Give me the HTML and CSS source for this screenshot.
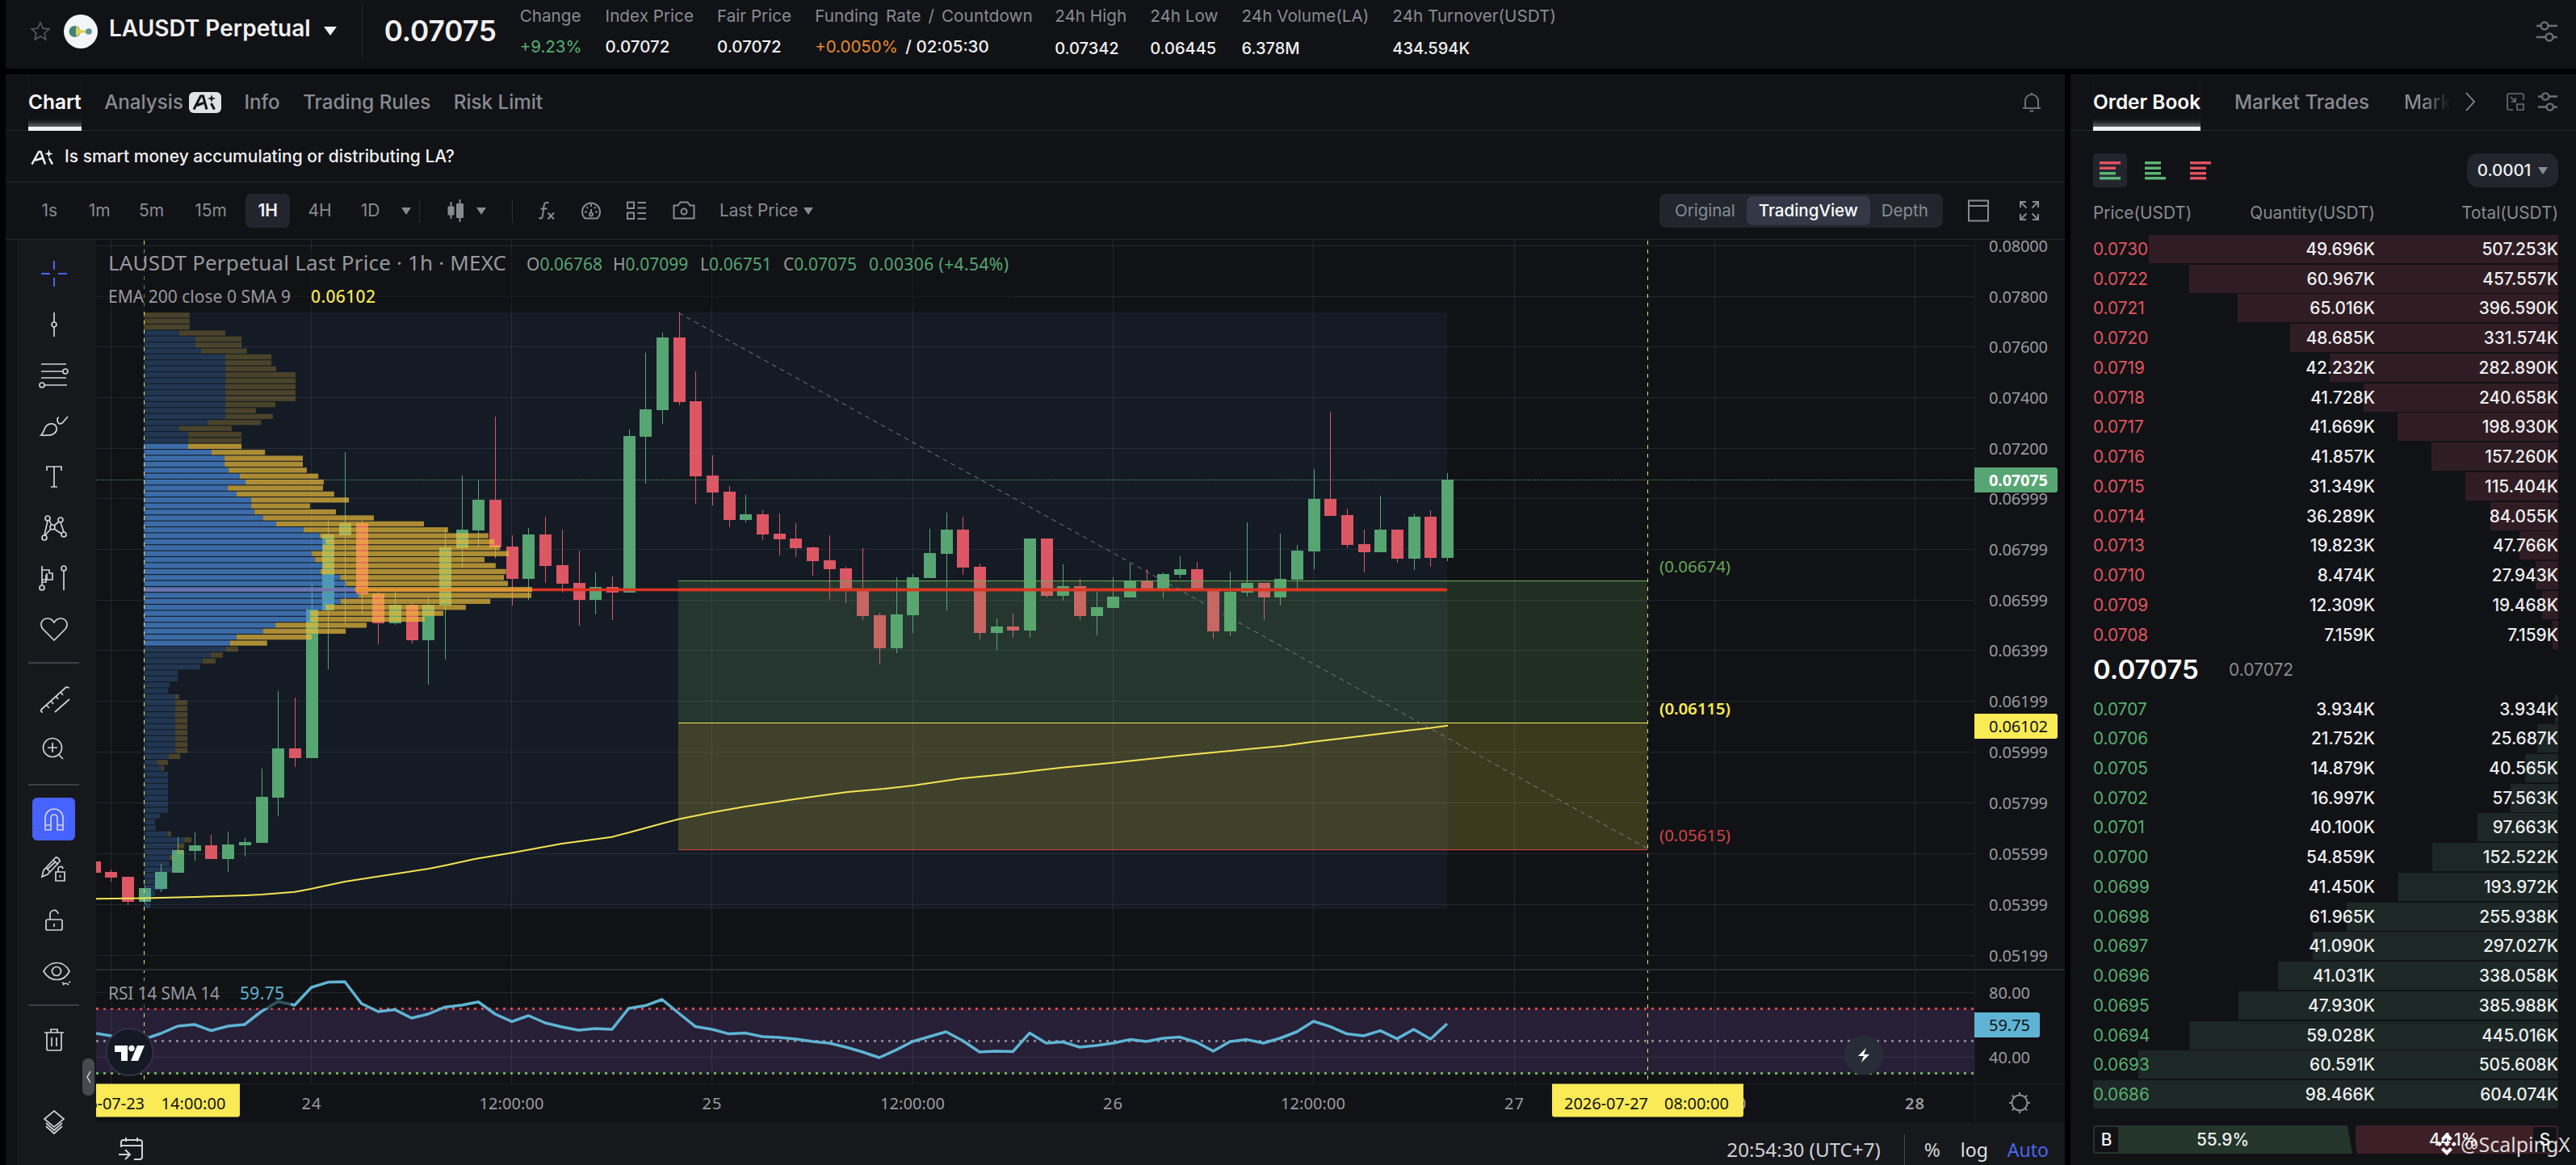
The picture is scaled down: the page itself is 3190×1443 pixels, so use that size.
FILE: index.html
```html
<!DOCTYPE html>
<html lang="en">
<head>
<meta charset="utf-8">
<title>LAUSDT Perpetual</title>
<link rel="stylesheet" href="styles.css">
</head>
<body>
<div class="app">
  <header class="ticker">
    <svg class="star" width="28" height="28" viewBox="0 0 28 28"><path d="M14 3l3.2 7.2 7.6.8-5.700 5.200 1.700 7.800L14 20l-6.800 4 1.700-7.800L3.200 11l7.600-.8z"/></svg>
    <svg class="coin" width="42" height="42" viewBox="0 0 42 42"><circle cx="21" cy="21" r="21" fill="#f4f5f7"/><circle cx="13.500" cy="21" r="7" fill="#3f8378"/><path d="M15 14.500c4 3 5 4.500 9 5 3 .5 4-1 6-3v9c-2-2-3-3.500-6-3-4 .5-5 2-9 5z" fill="#e0cf58"/><circle cx="31" cy="21" r="3.800" fill="#57969a"/></svg>
    <h1 class="pair">LAUSDT Perpetual</h1>
    <i class="caret caret-lg"></i>
    <div class="rule"></div>
    <div class="last">0.07075</div>
    <dl class="stats">
      <div><dt>Change</dt><dd class="up regular">+9.23%</dd></div>
      <div><dt>Index Price</dt><dd>0.07072</dd></div>
      <div><dt>Fair Price</dt><dd>0.07072</dd></div>
      <div><dt class="wide">Funding Rate / Countdown</dt><dd><span class="fund">+0.0050%</span> / 02:05:30</dd></div>
      <div class="low"><dt>24h High</dt><dd>0.07342</dd></div>
      <div class="low"><dt>24h Low</dt><dd>0.06445</dd></div>
      <div class="low"><dt>24h Volume(LA)</dt><dd>6.378M</dd></div>
      <div class="low"><dt>24h Turnover(USDT)</dt><dd>434.594K</dd></div>
    </dl>
    <svg class="sliders push" width="28" height="28" viewBox="0 0 28 28"><path d="M1 7h6M15 7h12M1 21h12M21 21h6"/><circle cx="11" cy="7" r="4.500"/><circle cx="17" cy="21" r="4.500"/></svg>
  </header>

  <main class="workspace">
    <section class="panel market">
      <nav class="tabs">
        <a class="tab active">Chart</a>
        <a class="tab">Analysis<span class="badge"><svg width="34" height="20" viewBox="0 0 34 20"><path d="M3 18.500L11.500 2h3l4.500 16.500M7 13.500l8-3M24.500 11l4 7.500"/><path class="fill" d="M25 0l1.200 3.800L30 5l-3.800 1.200L25 10l-1.200-3.800L20 5l3.800-1.200z"/></svg></span></a>
        <a class="tab">Info</a>
        <a class="tab">Trading Rules</a>
        <a class="tab">Risk Limit</a>
        <svg class="ico bell push" width="26" height="28" viewBox="0 0 26 28"><path d="M13 3v2M5 22V13a8 8 0 0 1 16 0v9M2 22h22M10.500 25.500h5"/></svg>
      </nav>

      <div class="insight">
        <svg width="30" height="20" viewBox="0 0 30 20"><path d="M1.500 18.500L10 3h2.500L18 18.500M5.500 13.500L14.500 11M23 11l4 7.500"/><path class="fill" d="M22.500 0l1.200 4.300L28 5.500l-4.300 1.200L22.500 11l-1.200-4.300L17 5.500l4.300-1.200z"/></svg>
        <span>Is smart money accumulating or distributing LA?</span>
      </div>

      <div class="toolbar">
        <div class="intervals">
          <span>1s</span><span>1m</span><span>5m</span><span class="m15">15m</span><span class="on">1H</span><span>4H</span><span>1D</span>
        </div>
        <i class="caret c1"></i>
        <i class="vr"></i>
        <svg class="kicon" width="22" height="28" viewBox="0 0 22 28"><path d="M4.500 3v21M15.500 0v28" stroke="#878b93" stroke-width="2"/><path d="M1.500 8.500h6q1 0 1 1v9q0 1-1 1h-6q-1 0-1-1v-9q0-1 1-1zM12 5h7q1 0 1 1v16q0 1-1 1h-7q-1 0-1-1V6q0-1 1-1z" fill="#878b93"/></svg>
        <i class="caret c2"></i>
        <i class="vr v2"></i>
        <svg class="ico" width="24" height="26" viewBox="0 0 24 26"><path d="M14.500 3.500c-4-2-5.500 0-6 4L7 19c-.5 3.500-2 4-4.500 3M4.500 10.500h8M13.500 15.500l7.500 8M21 15.500l-7.500 8"/></svg>
        <svg class="ico" width="26" height="26" viewBox="0 0 26 26"><path d="M5.500 22.500A11 11 0 1 1 20.500 22.500zM13 5v3M7.500 8.500l1.500 1.500M18.500 8.500L17 10M5 14.500h3M18 14.500h3M13 11v4"/><circle cx="13" cy="17.500" r="2"/></svg>
        <svg class="ico" width="26" height="26" viewBox="0 0 26 26"><path d="M2 2.500h8v7.500H2zM2 15.500h8V23H2zM14.500 3H25M14.500 9.500H25M14.500 16H25M14.500 23H25"/></svg>
        <svg class="ico cam" width="28" height="26" viewBox="0 0 28 26"><path d="M1.500 6.500h5l3-4h9l3 4h5v16h-25z"/><circle cx="14" cy="14" r="3.500"/></svg>
        <span class="lp">Last Price</span><i class="caret c3"></i>
        <div class="modes push"><span>Original</span><span class="on">TradingView</span><span>Depth</span></div>
        <svg class="ico" width="28" height="28" viewBox="0 0 28 28"><path d="M2 1.500h24v25H2zM2 8h24"/></svg>
        <svg class="ico expand" width="26" height="26" viewBox="0 0 26 26"><path d="M2 9V2h7M2 2l7.500 7.500M17 2h7v7M24 2l-7.500 7.500M2 17v7h7M2 24l7.500-7.500M24 17v7h-7M24 24l-7.500-7.500"/></svg>
      </div>

      <div class="charting">
        <aside class="tools">
          <svg class="t" viewBox="-20 -20 40 40"><path stroke="#4466f5" stroke-width="2" d="M-16 0h11M5 0h11M0-16v11M0 5v11"/></svg>
          <svg class="t" viewBox="-20 -20 40 40"><path d="M0-15v12M0 3v12"/><circle r="3"/></svg>
          <svg class="t" viewBox="-20 -20 40 40"><path d="M-16-14h31M-16-5h27M-16 3h31M-12 12h28"/><circle cx="14" cy="-5" r="3"/><circle cx="-15" cy="12" r="3"/></svg>
          <svg class="t" viewBox="-20 -20 40 40"><path d="M-16 11c3-2 3-7 6-11 4-5 12-4 13 2 1 7-7 10-13 9-3 1-4 0-6 0zM4-9c0 6 3 7 6 5l7-8M6-11c-2 0-2 2-2 3"/></svg>
          <svg class="t" viewBox="-20 -20 40 40"><path d="M-9-8v-5H9v5M0-13v25M-4 12h8"/></svg>
          <svg class="t" viewBox="-20 -20 40 40"><circle cx="-8" cy="-11" r="3"/><circle cx="8" cy="-9" r="3"/><circle cx="-2" cy="0" r="3"/><circle cx="-12" cy="13" r="3"/><circle cx="12" cy="9" r="3"/><path d="M-8-8l-4 18M-6-9l3 7M6-7L0-2M8-6l4 12M0 2l9 6M-4 2l-7 8"/></svg>
          <svg class="t" viewBox="-20 -20 40 40"><path d="M-15-15V9M-15-10h9v4h4v8h-13M-15 5h5v-9M-9 2v-8M12-9v24"/><circle cx="-15" cy="12" r="3"/><circle cx="12" cy="-12" r="3"/></svg>
          <svg class="t" viewBox="-20 -20 40 40"><path d="M0 14L-14 0c-5-7 0-13 6-13 4 0 6 2 8 5 2-3 4-5 8-5 6 0 11 6 6 13z"/></svg>
          <i class="hr"></i>
          <svg class="t" viewBox="-20 -20 40 40"><path d="M-16 15v-3L15-16l4 1M-16 15h2M1 15L19-1M-10 6l4 4M-4 1l3 4M2-5l3 4M8-10l3 4"/></svg>
          <svg class="t t-zoom" viewBox="-20 -20 40 40"><circle cx="-2" cy="-1" r="11.500"/><path d="M-8-1h12M-2-7v12M6 8l5 5"/></svg>
          <i class="hr hr-2"></i>
          <div class="magnet"><svg class="t" viewBox="-20 -20 40 40"><path d="M-11 13V-2a11 11 0 0 1 22 0v15H4V-2a4 4 0 0 0-8 0v15zM-11 7h7M4 7h7"/></svg></div>
          <svg class="t" viewBox="-20 -20 40 40"><path d="M-15 9l2-8L1-14q2-2 4 0l1 1q2 2 0 4L-8 6zM-10-2l5 5M-1-12l6 6M-9 0L2-10M2 3h11v11H2zM5 3v-3a3 3 0 0 1 6-1M7.500 7v3"/></svg>
          <svg class="t" viewBox="-20 -20 40 40"><path d="M-8-1H8q2 0 2 2v9q0 2-2 2H-8q-2 0-2-2V1q0-2 2-2zM-5-1v-6a5 5 0 0 1 10-1M0 4v4"/></svg>
          <svg class="t" viewBox="-20 -20 40 40"><path d="M-13 0C-5-14 12-14 19 0 12 14-5 14-13 0z"/><circle cx="3" r="5.500"/><path d="M11 17q3-4 7 0M12 15l-2-1M18 14l2-1"/></svg>
          <i class="hr hr-3"></i>
          <svg class="t" viewBox="-20 -20 40 40"><path d="M-12-9h24M-9-9v20q0 2 2 2H7q2 0 2-2V-9M-4-9v-4h8v4M-3-3v11M3-3v11"/></svg>
          <svg class="t layers" viewBox="-20 -20 40 40"><path d="M0-14L12-4 0 6-12-4zM-10 1L0 10 10 1M-10 5L0 14 10 5"/></svg>
        </aside>

        <div class="plotcol">
          <svg class="plot" id="plot" width="2438" height="1093" viewBox="119 297 2438 1093">
            <g id="grid" class="grid"></g>
            <rect x="178.500" y="387" width="1614" height="739" fill="rgba(60,130,200,.085)"/>
            <rect x="119" y="1249.500" width="2326" height="80" fill="#261f36"/>
            <path class="grid" d="M119 1309.500H2445M137.500 1250v79M385.500 1250v79M633.500 1250v79M881.500 1250v79M1130.500 1250v79M1378.500 1250v79M1626.500 1250v79M1875.500 1250v79M2123.500 1250v79M2371.500 1250v79"/>
            <g id="candles"></g>
            <path d="M119 594.500H2445" stroke="#56a573" stroke-dasharray="1 1.250"/>
            <path d="M178.500 730.500H1792" stroke="#db3522" stroke-width="3.500"/>
            <g id="profile"></g>
            <rect x="840" y="720" width="1200" height="175" fill="rgba(104,176,96,.19)"/>
            <rect x="840" y="895" width="1200" height="157" fill="rgba(248,232,70,.19)"/>
            <path d="M840 719.500H2040" stroke="#6aac58"/>
            <path d="M840 895.500H2040" stroke="#f7e94f"/>
            <path d="M840 1052.500H2040" stroke="#d8433f"/>
            <path d="M840 730.500H1792" stroke="#db3522" stroke-width="3.500"/>
            <path d="M840.500 387.500L2040 1051" stroke="#85868c" stroke-dasharray="6 5" opacity=".9"/>
            <path d="M178.500 298V1342M2040.500 298V1342" stroke="#f3e45c" stroke-dasharray="5 6"/>
            <path class="ema" d="M119 1113.300L179 1112.500 241 1111 304 1109 324 1108 365 1104.700 385 1101 427 1092 469 1085.400 531 1076 551 1072 589 1063.700 633 1056.500 695.600 1045 757.700 1036.700 778.600 1031.300 819 1020.300 840 1014.700 882 1006.300 923 999 985 989.700 1049.500 981 1095 977 1130.500 973 1190 964.300 1254 958 1280 954.700 1315 950.700 1378.600 944.700 1463 935.700 1544 928 1590 923.700 1626 918.700 1667 914 1750 904 1771 901.700 1793 898.700"/>
            <path d="M119 1249.500H2445" stroke="#dc4a4a" stroke-width="3" stroke-dasharray="3 6"/>
            <path d="M119 1289.500H2445" stroke="#85828f" stroke-width="3" stroke-dasharray="3 6"/>
            <path d="M119 1329.500H2445" stroke="#6fb05a" stroke-width="3" stroke-dasharray="3 6"/>
            <polyline id="rsi" class="rsi"/>
            <rect x="128" y="1213" width="232" height="36" fill="rgba(17,18,21,.6)"/>
            <path d="M119 1201H2557" stroke="#2a2b2f" stroke-width="2"/>
            <path d="M119 1342.500H2557M2445.500 297V1390" stroke="#1e1f23"/>

            <rect x="128" y="310" width="1128" height="70" fill="rgba(17,18,21,.5)"/>
            <g class="txt legend">
              <text x="134" y="335" font-size="26" textLength="493">LAUSDT Perpetual Last Price · 1h · MEXC</text>
              <text x="652" y="335">O<tspan class="g">0.06768</tspan></text>
              <text x="759" y="335">H<tspan class="g">0.07099</tspan></text>
              <text x="867" y="335">L<tspan class="g">0.06751</tspan></text>
              <text x="970" y="335">C<tspan class="g">0.07075</tspan></text>
              <text x="1076" y="335" class="g" textLength="173">0.00306 (+4.54%)</text>
              <text x="134" y="375" textLength="226">EMA 200 close 0 SMA 9</text>
              <text x="385" y="375" class="y" textLength="80">0.06102</text>
              <text x="134" y="1238" textLength="138">RSI 14 SMA 14</text>
              <text x="297" y="1238" fill="#5fb4d3" textLength="55">59.75</text>
            </g>
            <g class="txt lvl">
              <text x="2055" y="709" fill="#64a657" textLength="88">(0.06674)</text>
              <text x="2055" y="885" fill="#f8ea56" font-weight="600" textLength="88">(0.06115)</text>
              <text x="2055" y="1042" fill="#d04545" textLength="88">(0.05615)</text>
            </g>
            <g class="txt axis" id="priceAxis"></g>
            <g class="txt axis time">
              <text x="385.500" y="1374" textLength="24">24</text>
              <text x="633.500" y="1374" textLength="80">12:00:00</text>
              <text x="881.500" y="1374" textLength="24">25</text>
              <text x="1130" y="1374" textLength="80">12:00:00</text>
              <text x="1378" y="1374" textLength="24">26</text>
              <text x="1626" y="1374" textLength="80">12:00:00</text>
              <text x="1875" y="1374" textLength="24">27</text>
              <text x="2122.500" y="1374" textLength="80">12:00:00</text>
              <text x="2371" y="1374" font-weight="600" textLength="24">28</text>
            </g>
            <path d="M119 1342.500h178v38q0 3-3 3H119zM1922 1342.500h237v38q0 3-3 3h-231q-3 0-3-3z" fill="#f9ea56"/>
            <g class="txt tags">
              <text x="75" y="1374" textLength="104">2026-07-23</text><text x="199.500" y="1374" textLength="80">14:00:00</text>
              <text x="1937" y="1374" textLength="104">2026-07-27</text><text x="2061" y="1374" textLength="80">08:00:00</text>
            </g>
            <path d="M2445 579h100q3 0 3 3v25q0 3-3 3h-100z" fill="#56a573"/>
            <path d="M2445 884h100q3 0 3 3v25q0 3-3 3h-100z" fill="#f9ea56"/>
            <path d="M2445 1254h78q3 0 3 3v25q0 3-3 3h-78z" fill="#5fb4d3"/>
            <g class="txt tags">
              <text x="2463" y="602" fill="#fff" font-weight="700" textLength="73">0.07075</text>
              <text x="2463" y="907" textLength="73">0.06102</text>
              <text x="2463" y="1277" textLength="51">59.75</text>
            </g>
            <g class="gear" transform="translate(2501 1366)"><circle r="9.500"/><path d="M0-9.500V-13M0 9.500V13M-9.500 0H-13M9.500 0H13M-6.700-6.700l-2.500-2.500M6.700 6.700l2.500 2.500M-6.700 6.700l-2.500 2.500M6.700-6.700l2.500-2.500"/></g>
            <circle cx="2308" cy="1307" r="24.500" fill="#272d36"/>
            <path d="M2311 1298l-10 10h7l-3 8 10-10h-7z" fill="#fff"/>
            <circle cx="160.500" cy="1303" r="29" fill="#141a23" stroke="#332f47" stroke-width="2"/>
            <path d="M142 1295h16v19h-8v-11h-8zM170 1295h9l-8 19h-9z" fill="#fff"/><circle cx="163" cy="1298.500" r="3.700" fill="#fff"/>
          </svg>
          <footer class="chartfoot">
            <svg class="cal" width="32" height="30" viewBox="0 0 32 30"><path d="M3 12V6q0-3 3-3h20q3 0 3 3v18q0 3-3 3h-7M3 10h26M9 0v5M23 0v5M0 21h13M8 15l6 6-6 6"/></svg>
            <span class="clock push">20:54:30 (UTC+7)</span>
            <i class="vr"></i>
            <span class="pc">%</span><span class="log">log</span><span class="auto">Auto</span>
          </footer>
          <div class="fold"><svg width="8" height="16" viewBox="0 0 8 16"><path d="M6 1L2 8l4 7"/></svg></div>
        </div>
      </div>
    </section>

    <section class="panel book">
      <nav class="tabs">
        <a class="tab active">Order Book</a>
        <a class="tab">Market Trades</a>
        <a class="tab fade">Mark</a>
        <svg class="chev" width="16" height="24" viewBox="0 0 16 24"><path d="M2 1l10 11L2 23"/></svg>
        <svg class="ico pop" width="24" height="24" viewBox="0 0 24 24"><path d="M9 22H4q-2 0-2-2V4q0-2 2-2h16q2 0 2 2v6M14 15h8v7h-8zM6 6l6 6M12 7v5H7"/></svg>
        <svg class="sliders" width="26" height="26" viewBox="0 0 28 28"><path d="M1 7h6M15 7h12M1 21h12M21 21h6"/><circle cx="11" cy="7" r="4.500"/><circle cx="17" cy="21" r="4.500"/></svg>
      </nav>
      <div class="views">
        <span class="view on"><svg width="26" height="24" viewBox="0 0 26 24"><path class="r" d="M0 1h26v3.500H0zM0 7.500h20V11H0z"/><path class="g" d="M0 14h20v3.500H0zM0 20h26v3.500H0z"/></svg></span>
        <span class="view"><svg width="26" height="24" viewBox="0 0 26 24"><path class="g" d="M0 1h20v3.500H0zM0 7.500h20V11H0zM0 14h20v3.500H0zM0 20h26v3.500H0z"/></svg></span>
        <span class="view"><svg width="26" height="24" viewBox="0 0 26 24"><path class="r" d="M0 1h26v3.500H0zM0 7.500h20V11H0zM0 14h20v3.500H0zM0 20h20v3.500H0z"/></svg></span>
        <span class="step push">0.0001<i class="caret"></i></span>
      </div>
      <div class="row head"><span>Price(USDT)</span><span>Quantity(USDT)</span><span>Total(USDT)</span></div>
      <div class="side asks">
        <div class="row"><i style="width:88.1%"></i><span>0.0730</span><span>49.696K</span><span>507.253K</span></div>
        <div class="row"><i style="width:79.4%"></i><span>0.0722</span><span>60.967K</span><span>457.557K</span></div>
        <div class="row"><i style="width:68.9%"></i><span>0.0721</span><span>65.016K</span><span>396.590K</span></div>
        <div class="row"><i style="width:57.6%"></i><span>0.0720</span><span>48.685K</span><span>331.574K</span></div>
        <div class="row"><i style="width:49.1%"></i><span>0.0719</span><span>42.232K</span><span>282.890K</span></div>
        <div class="row"><i style="width:41.8%"></i><span>0.0718</span><span>41.728K</span><span>240.658K</span></div>
        <div class="row"><i style="width:34.6%"></i><span>0.0717</span><span>41.669K</span><span>198.930K</span></div>
        <div class="row"><i style="width:27.3%"></i><span>0.0716</span><span>41.857K</span><span>157.260K</span></div>
        <div class="row"><i style="width:20.0%"></i><span>0.0715</span><span>31.349K</span><span>115.404K</span></div>
        <div class="row"><i style="width:14.6%"></i><span>0.0714</span><span>36.289K</span><span>84.055K</span></div>
        <div class="row"><i style="width:8.3%"></i><span>0.0713</span><span>19.823K</span><span>47.766K</span></div>
        <div class="row"><i style="width:4.9%"></i><span>0.0710</span><span>8.474K</span><span>27.943K</span></div>
        <div class="row"><i style="width:3.4%"></i><span>0.0709</span><span>12.309K</span><span>19.468K</span></div>
        <div class="row"><i style="width:1.2%"></i><span>0.0708</span><span>7.159K</span><span>7.159K</span></div>
      </div>
      <div class="mid"><b>0.07075</b><span>0.07072</span></div>
      <div class="side bids">
        <div class="row"><i style="width:0.7%"></i><span>0.0707</span><span>3.934K</span><span>3.934K</span></div>
        <div class="row"><i style="width:4.6%"></i><span>0.0706</span><span>21.752K</span><span>25.687K</span></div>
        <div class="row"><i style="width:7.2%"></i><span>0.0705</span><span>14.879K</span><span>40.565K</span></div>
        <div class="row"><i style="width:10.2%"></i><span>0.0702</span><span>16.997K</span><span>57.563K</span></div>
        <div class="row"><i style="width:17.3%"></i><span>0.0701</span><span>40.100K</span><span>97.663K</span></div>
        <div class="row"><i style="width:27.1%"></i><span>0.0700</span><span>54.859K</span><span>152.522K</span></div>
        <div class="row"><i style="width:34.4%"></i><span>0.0699</span><span>41.450K</span><span>193.972K</span></div>
        <div class="row"><i style="width:45.5%"></i><span>0.0698</span><span>61.965K</span><span>255.938K</span></div>
        <div class="row"><i style="width:52.8%"></i><span>0.0697</span><span>41.090K</span><span>297.027K</span></div>
        <div class="row"><i style="width:60.2%"></i><span>0.0696</span><span>41.031K</span><span>338.058K</span></div>
        <div class="row"><i style="width:68.8%"></i><span>0.0695</span><span>47.930K</span><span>385.988K</span></div>
        <div class="row"><i style="width:79.4%"></i><span>0.0694</span><span>59.028K</span><span>445.016K</span></div>
        <div class="row"><i style="width:90.2%"></i><span>0.0693</span><span>60.591K</span><span>505.608K</span></div>
        <div class="row"><i style="width:100%"></i><span>0.0686</span><span>98.466K</span><span>604.074K</span></div>
      </div>
      <div class="ratio">
        <div class="buy"><b>B</b><span>55.9%</span></div>
        <div class="sell"><span>44.1%</span><b>S</b></div>
      </div>
      <div class="mark"><svg width="24" height="28" viewBox="0 0 24 28"><path d="M12 0l7 7-3 3-4-4-4 4-3-3zM3 11l3 3-3 3-3-3zM21 11l3 3-3 3-3-3zM12 11l3 3-3 3-3-3zM8 18l4 4 4-4 3 3-7 7-7-7z"/></svg><span>@ScalpingX</span></div>
    </section>
  </main>
</div>
<script src="chart.js"></script>
</body>
</html>
```
FILE: styles.css
```css
*{box-sizing:border-box}
body{margin:0;background:#000;color:#f0f1f3;font:400 21px/1.2 Inter,"Liberation Sans",sans-serif;overflow:hidden}
h1,dl,dd,dt{margin:0;font:inherit}
i{font-style:normal;display:block}
svg{display:block;flex:none}
.push{margin-left:auto!important}
.app{width:3190px;height:1443px;display:flex;flex-direction:column;gap:7px;padding-left:7px;overflow:hidden}
.panel,.ticker{background:#111215}
.caret{width:0;height:0;border:6.500px solid transparent;border-top:9px solid #878b93;border-bottom:0;flex:none}
.caret-lg{border-width:8.500px;border-top-width:11px;border-top-color:#f0f1f3;margin-left:16px}

.ticker{height:85px;display:flex;align-items:center;padding:0 22px 8px 29px;flex:none}
.star path{fill:none;stroke:#55585f;stroke-width:1.700}
.coin{margin-left:15px}
.pair{font-weight:600;font-size:28px;margin:-6px 0 0 14px;white-space:nowrap}
.rule{width:1px;height:70px;background:#26272c;margin-left:31px}
.last{font-size:35.200px;font-weight:600;margin-left:27px;width:141px}
.stats{display:flex;gap:29px;margin-left:27px;padding-top:2px}
.stats>div{display:flex;flex-direction:column;gap:14px;white-space:nowrap;height:63px}
.stats dt{color:#878b93;line-height:24px;font-size:20.700px}
.stats dt.wide{word-spacing:3px;letter-spacing:.06px;width:268px}
.stats dd{font-weight:500;line-height:24px;font-size:20.500px}
.stats dd.regular{font-weight:400}
.stats .low dd{font-size:20px;padding-top:2px}
.up{color:#56b071}
.fund{color:#e58b2f;margin-right:4px;font-weight:400}
.sliders{fill:none;stroke:#6c6f76;stroke-width:2.500}

.workspace{flex:1;display:grid;grid-template-columns:2550px 1fr;gap:7px;min-height:0}
.tabs{height:70px;border-bottom:1px solid #26272c;display:flex;align-items:stretch;gap:28.500px;padding:0 28px}
.tab{display:flex;align-items:center;color:#878b93;font-weight:500;font-size:24.200px;height:70px;padding-bottom:1px;white-space:nowrap}
.tab.active{color:#fff;font-weight:600;font-size:24.400px;border-bottom:5px solid #f2f3f5;padding:4px 0 0;box-shadow:inset 0 -9px 9px -7px rgba(240,240,245,.55)}
.badge{background:#dfe3e3;border-radius:6px;width:40px;height:26px;margin-left:7px;display:flex;align-items:center;justify-content:center}
.badge path,.insight path{fill:none;stroke:#111;stroke-width:3}
.badge .fill{fill:#111;stroke:none}
.ico{fill:none;stroke:#878b93;stroke-width:2}
.bell{align-self:center;margin-top:-1px;stroke:#6c6f76}
.insight{height:64px;border-bottom:1px solid #26272c;display:flex;align-items:center;gap:12px;padding:2px 0 0 31px;font-weight:500}
.insight span{margin-top:-2px}
.insight path{stroke:#f0f1f3;stroke-width:2.500}
.insight .fill{fill:#f0f1f3;stroke:none}

.toolbar{height:71px;border-bottom:1px solid #26272c;display:flex;align-items:center;padding:0 31px 0 32px;color:#878b93;font-size:21px}
.intervals{display:flex;align-items:center;gap:11px}
.intervals span,.modes span{height:42px;line-height:42px;padding:0 12.500px;border-radius:7px;white-space:nowrap}
.intervals span:nth-child(2){padding:0 12px 0 15px}
.intervals .m15{margin-left:2px}
.intervals .on{background:#22252e;color:#f0f1f3;font-weight:600;padding:0 15px;margin:0 -1px 0 0}
.c1{margin-left:14px}
.vr{width:1px;height:29px;background:#2b2d33}
.c1+.vr{margin:0 34px 0 10px}
.c2{margin-left:14px}
.v2{margin:0 30px 0 32px}
.toolbar .ico+.ico{margin-left:30px}
.toolbar .ico+.cam{margin-left:32px}
.lp{margin-left:30px;font-size:20.800px}
.c3{margin-left:7px}
.modes{display:flex;background:#22252e;border-radius:8px;padding:0 5px;align-items:center;margin-right:30px;width:351px;font-size:20.500px}
.modes span{padding:0 14px}
.modes .on{height:36px;line-height:36px;background:#343746;color:#fff;font-weight:500;padding:0 15px}
.toolbar .expand{margin-left:36px!important}

.charting{display:flex;height:1146px;padding-left:14px}
.tools{width:98px;background:#17181c;padding:11px 7px 0 0;display:flex;flex-direction:column;align-items:center}
.t{width:40px;height:40px;margin:11.400px 0;fill:none;stroke:#cfd2d6;stroke-width:1.700;overflow:visible}
.hr{width:63px;height:2px;background:#3d4046;margin:10px 0 13px;flex:none}
.t-zoom{margin:9px 0}
.hr-2{margin:15px 0 10px}
.hr-3{margin:10px 0}
.magnet{width:53px;height:53px;border-radius:6px;background:#4662ff;margin:5px 0;flex:none;display:grid;place-items:center}
.magnet .t{margin:0}
.layers{margin-top:51px}
.plotcol{width:2438px;display:flex;flex-direction:column;position:relative}
.plot{background:#111215}
.grid,.grid path{stroke:rgba(170,180,200,.13);fill:none}
.ema{fill:none;stroke:#f3e455;stroke-width:2}
.rsi{fill:none;stroke:#5fb4d3;stroke-width:3.500;stroke-linejoin:round}
.txt{font-family:"Noto Sans","DejaVu Sans",sans-serif;font-size:21px}
.legend{fill:#97989e}
.legend .g{fill:#56a573}
.legend .y{fill:#f3e455;font-weight:500}
.lvl{font-size:20.500px}
.axis{fill:#9a9ca1;font-size:20px}
.time{text-anchor:middle}
.tags{fill:#111215;font-size:20px}
.gear{fill:none;stroke:#8d8f95;stroke-width:2}
.chartfoot{flex:1;background:#17181c;display:flex;align-items:center;padding:15px 20px 0 28px;font:24px "Noto Sans",sans-serif;color:#cfd1d5}
.cal{fill:none;stroke:#cfd2d6;stroke-width:2}
.chartfoot .vr{height:38px;background:#44464c;margin-left:29px}
.pc{margin-left:24px}
.log{margin-left:25px;color:#dfe1e4}
.auto{margin-left:24px;color:#4a68ee}
.clock,.pc,.log,.auto{white-space:nowrap;font-size:24.200px;line-height:36px}
.log,.auto{font-size:23px}
.fold{position:absolute;left:-17px;top:1014px;width:15px;height:46px;border-radius:7px;background:#484a51;display:grid;place-items:center}
.fold path{fill:none;stroke:#cfd2d6;stroke-width:1.500}

.book{display:flex;flex-direction:column;position:relative}
.book .tabs{padding:0 23px 0 28px;gap:0}
.book .tab+.tab{margin-left:42px}
.book .tab.fade{width:62px;margin-left:43px;overflow:hidden;background:linear-gradient(90deg,#878b93 40%,#111215 92%);-webkit-background-clip:text;background-clip:text;color:transparent}
.chev{fill:none;stroke:#878b93;stroke-width:1.800;align-self:center;margin:-1px 0 0 13px}
.pop{align-self:center;margin:-1px 0 0 35px;stroke:#6c6f76;stroke-width:1.600}
.book .sliders{align-self:center;margin:-1px 0 0 auto}
.views{display:flex;align-items:center;padding:28px 23px 0 28px;gap:14px}
.view{width:42px;height:42px;border-radius:4px;display:grid;place-items:center}
.view.on{background:#22252e}
.view .r{fill:#e05260}.view .g{fill:#5cb478}
.step{background:#22252e;border-radius:14px;height:42px;width:113px;display:flex;align-items:center;justify-content:center;gap:9px;font-weight:500;font-size:20.500px}
.row{display:grid;grid-template-columns:1fr 1fr 1fr;position:relative;height:35px;align-items:center;font-size:20.800px;font-weight:500;color:#eef0f2}
.row span{position:relative;line-height:35px}
.row span:nth-of-type(n+2){text-align:right}
.row span:nth-of-type(2){margin-right:35px}
.row i{position:absolute;right:0;top:0;bottom:0}
.head{margin:14px 23px 0 28px;color:#878b93;font-weight:400;height:34px}
.side{margin:0 23px 0 28px;display:flex;flex-direction:column;gap:1.740px}
.asks{margin-top:11px}
.asks i{background:#301d23}.bids i{background:#1d2725}
.side .row span:first-of-type{font-weight:400;color:#e15561}
.bids .row span:first-of-type{color:#56b071!important}
.mid{height:57px;margin:0 28px;display:flex;align-items:center;gap:39px;color:#878b93;font-size:21px;padding-bottom:5px}
.mid b{color:#fff;font-size:33px;font-weight:600;width:129px}
.ratio{display:grid;grid-template-columns:325px 251px;height:35px;margin:21px 23px 0 28px;font-weight:500;font-size:20.800px;line-height:35px}
.ratio>div{display:flex;align-items:center}
.ratio b{width:33px;height:35px;line-height:31px;text-align:center;background:#111215;font-weight:500;border-radius:4px}
.buy{background:#24352b;clip-path:polygon(0 0,315px 0,321px 100%,0 100%);border-radius:4px}
.buy b{border:2px solid #24352b}
.buy span{margin-left:95px}
.sell{background:#3d1f26;clip-path:polygon(-3px 0,100% 0,100% 100%,2px 100%);border-radius:4px}
.sell b{border:2px solid #3d1f26;margin-left:auto}
.sell span{margin-left:91px}
.mark{position:absolute;left:454px;top:1307px;display:flex;align-items:center;gap:5px;font:25px/36px "Noto Sans",sans-serif;color:rgba(255,255,255,.85)}
.mark path{fill:#fff}
```
FILE: chart.js
```js
const NS = 'http://www.w3.org/2000/svg';
const add = (parent, tag, attrs) => {
  const el = document.createElementNS(NS, tag);
  for (const k in attrs) el.setAttribute(k, attrs[k]);
  return parent.appendChild(el);
};
const byId = id => document.getElementById(id);

const levels = [['0.08000', 304], ['0.07800', 367], ['0.07600', 429], ['0.07400', 492], ['0.07200', 555],
  ['0.06999', 617], ['0.06799', 680], ['0.06599', 743], ['0.06399', 805], ['0.06199', 868],
  ['0.05999', 931], ['0.05799', 994], ['0.05599', 1057], ['0.05399', 1120], ['0.05199', 1183],
  ['80.00', 1229], ['40.00', 1309]];
let d = '';
for (const [label, y] of levels) {
  d += `M119 ${y + .5}H2445`;
  add(byId('priceAxis'), 'text', { x: 2463, y: y + 8, textLength: label.length > 5 ? 73 : 51 }).textContent = label;
}
for (const x of [137, 385, 633, 881, 1130, 1378, 1626, 1875, 2123, 2371]) d += `M${x + .5} 297V1250M${x + .5} 1329V1342`;
add(byId('grid'), 'path', { d });

// bar index, direction, high, body top, body bottom, low
const candles = `-1r 1067 1067 1081 1081|0r 1077 1080 1087 1092|1r 1086 1086 1117 1121|2g 1096 1100 1117 1120|3g 1070 1080 1101 1105|4g 1037 1053 1081 1081|5g 1031 1047 1054 1066|6r 1034 1047 1064 1064|7g 1030 1046 1064 1080|8g 1038 1043 1047 1061|9g 952 987 1044 1044|10g 856 927 988 1011|11r 864 927 939 950|12g 723 755 939 939|13g 645 662 756 829|14g 560 648 663 772|15r 643 648 736 760|16r 732 735 772 798|17g 732 749 772 774|18r 747 749 793 797|19g 739 749 793 848|20g 655 678 750 817|21g 589 656 679 703|22g 595 619 657 678|23r 516 619 678 692|24r 663 677 717 750|25g 654 662 717 743|26r 640 662 701 722|27r 656 700 723 734|28r 682 722 743 775|29g 709 727 743 761|30r 714 727 734 768|31g 532 540 734 734|32g 437 507 541 599|33g 412 418 508 525|34r 387 418 498 502|35r 460 497 590 624|36r 564 589 610 626|37r 602 609 644 653|38g 613 637 644 647|39r 632 637 662 669|40r 636 661 668 688|41r 648 667 679 690|42r 677 678 695 713|43r 663 694 705 742|44r 702 704 730 747|45r 679 730 763 768|46r 759 762 803 823|47g 715 761 803 809|48g 711 715 762 784|49g 655 685 716 716|50g 635 656 686 756|51r 640 656 703 712|52r 698 702 784 792|53g 766 776 784 805|54r 760 776 781 790|55g 667 667 781 790|56r 667 667 738 740|57g 699 726 738 744|58r 717 726 763 768|59g 733 752 763 787|60g 715 739 753 753|61g 698 719 740 740|62r 705 719 730 730|63g 709 711 730 741|64g 689 705 712 716|65r 696 705 730 730|66r 730 730 782 791|67g 708 733 782 788|68g 647 722 734 739|69r 722 722 740 768|70g 661 717 740 750|71g 675 682 718 730|72g 581 618 683 705|73r 510 618 639 639|74r 630 638 675 679|75r 656 674 684 709|76g 614 656 684 684|77r 656 656 692 697|78g 636 640 692 706|79r 632 640 691 702|80g 586 594 691 695`;
for (const c of candles.split('|')) {
  const [, i, dir, rest] = c.match(/^(-?\d+)([rg]) (.*)$/);
  const [hi, top, bot, lo] = rest.split(' ').map(Number);
  const x = Math.round(137.4 + 20.683 * i), fill = dir === 'r' ? '#dd5664' : '#56a573';
  add(byId('candles'), 'rect', { x: x, y: hi, width: 1, height: lo - hi, fill });
  add(byId('candles'), 'rect', { x: x - 7, y: top, width: 15, height: bot - top, fill });
}

// price-volume rows: end of the up part, end of the down part (before the 2.24 scale)
const rows = [[399,526],[399,526],[399,526],[497,625],[542,670],[542,670],[558,685],[625,753],[625,753],[625,766],
  [625,820],[625,820],[625,820],[625,820],[625,820],[625,764],[625,710],[625,757],[576,724],[497,643],
  [522,670],[522,670],[522,670],[587,735],[623,840],[623,840],[634,851],[665,883],[681,898],[632,896],
  [656,927],[697,968],[697,860],[706,932],[730,1037],[766,1176],[842,1243],[887,1355],[903,1371],[895,1387],
  [865,1411],[874,1344],[895,1375],[889,1404],[944,1398],[959,1409],[985,1476],[995,1474],[945,1360],[903,1292],
  [860,1230],[860,1178],[764,1017],[730,959],[656,865],[638,741],[627,661],[585,618],[562,598],[551,553],
  [493,493],[493,493],[470,470],[466,466],[486,497],[486,520],[486,520],[486,520],[486,520],[486,520],
  [486,520],[486,520],[486,520],[486,520],[468,500],[435,466],[448,455],[466,466],[466,466],[466,466],
  [466,466],[466,466],[466,466],[466,466],[444,444],[430,430],[432,432],[466,475],[511,531],[492,511],
  [490,508],[470,480],[470,470],[477,477],[462,462],[460,460],[455,455],[430,430],[415,415],[417,417]];
rows.forEach(([a, b], n) => {
  const value = n >= 22 && n <= 55, y = 387.2 + 7.386 * n;
  const x0 = 178.3, x1 = a / 2.24, x2 = b / 2.24;
  add(byId('profile'), 'rect', { x: x0, y, width: Math.max(0, x1 - x0), height: 6.3, fill: `rgba(75,143,225,${value ? .7 : .24})` });
  add(byId('profile'), 'rect', { x: x1, y, width: x2 - x1, height: 6.3, fill: `rgba(237,188,60,${value ? .7 : .25})` });
});

const rsi = [1283,1291,1287,1280,1271,1269,1276.5,1271,1269,1253,1240.5,1245,1223,1216.6,1216,1243,1253,1250.6,1261,1256,
  1247.4,1245,1241,1256,1265.4,1258,1267,1272,1276,1274,1275,1249,1245.6,1238,1255,1271.6,1275,1280.6,1279.6,1284,
  1285,1287,1290,1292,1297,1303,1310,1300.6,1290,1284,1278,1289,1303,1302,1302.6,1279.6,1292,1290.6,1297,1295,
  1292,1287.6,1290,1286,1284.6,1291,1302,1290,1287.6,1292,1286,1278,1265,1271.6,1280.6,1283,1276.6,1286.6,1275,1287,1268];
byId('rsi').setAttribute('points', '119,1280 ' + rsi.map((y, i) => `${(137.4 + 20.683 * i).toFixed(1)},${y}`).join(' '));
```
